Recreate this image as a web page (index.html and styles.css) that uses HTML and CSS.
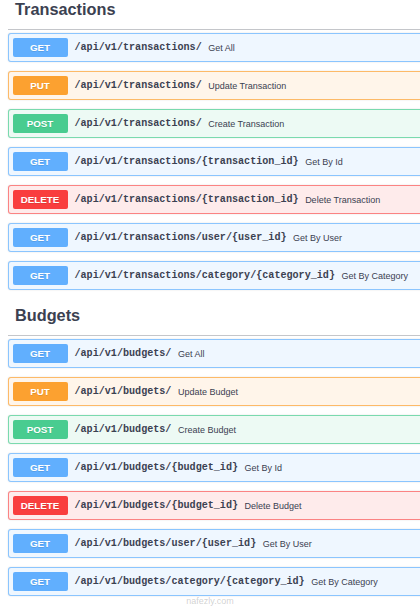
FILE: index.html
```html
<!DOCTYPE html>
<html lang="en">
<head>
  <meta charset="UTF-8">
  <title>API</title>
  <link rel="stylesheet" href="styles.css">
</head>
<body>
  <div class="wrapper">
    <section class="tag-section first">
      <h4 class="tag">Transactions</h4>
      <div class="op get"><span class="method">GET</span><span class="path">/api/v1/transactions/</span><span class="summary">Get All</span></div>
      <div class="op put"><span class="method">PUT</span><span class="path">/api/v1/transactions/</span><span class="summary">Update Transaction</span></div>
      <div class="op post"><span class="method">POST</span><span class="path">/api/v1/transactions/</span><span class="summary">Create Transaction</span></div>
      <div class="op get"><span class="method">GET</span><span class="path">/api/v1/transactions/{transaction_id}</span><span class="summary">Get By Id</span></div>
      <div class="op delete"><span class="method">DELETE</span><span class="path">/api/v1/transactions/{transaction_id}</span><span class="summary">Delete Transaction</span></div>
      <div class="op get"><span class="method">GET</span><span class="path">/api/v1/transactions/user/{user_id}</span><span class="summary">Get By User</span></div>
      <div class="op get"><span class="method">GET</span><span class="path">/api/v1/transactions/category/{category_id}</span><span class="summary">Get By Category</span></div>
    </section>

    <section class="tag-section">
      <h4 class="tag">Budgets</h4>
      <div class="op get"><span class="method">GET</span><span class="path">/api/v1/budgets/</span><span class="summary">Get All</span></div>
      <div class="op put"><span class="method">PUT</span><span class="path">/api/v1/budgets/</span><span class="summary">Update Budget</span></div>
      <div class="op post"><span class="method">POST</span><span class="path">/api/v1/budgets/</span><span class="summary">Create Budget</span></div>
      <div class="op get"><span class="method">GET</span><span class="path">/api/v1/budgets/{budget_id}</span><span class="summary">Get By Id</span></div>
      <div class="op delete"><span class="method">DELETE</span><span class="path">/api/v1/budgets/{budget_id}</span><span class="summary">Delete Budget</span></div>
      <div class="op get"><span class="method">GET</span><span class="path">/api/v1/budgets/user/{user_id}</span><span class="summary">Get By User</span></div>
      <div class="op get"><span class="method">GET</span><span class="path">/api/v1/budgets/category/{category_id}</span><span class="summary">Get By Category</span></div>
    </section>
  </div>

  <div class="watermark">nafezly.com</div>
</body>
</html>
```

FILE: styles.css
```css
html, body {
  margin: 0;
  padding: 0;
  background-color: #fff;
  overflow: hidden;
}
body {
  font-family: "Liberation Sans", Arial, sans-serif;
  color: #3b4151;
  position: relative;
  height: 609px;
}
.wrapper {
  width: 470px;
  padding-left: 8px;
}
.tag-section.first {
  margin-top: -7px;
}
.tag {
  margin: 0 0 3px;
  padding: 7px 14px 10px 7px;
  font-size: 16.3px;
  font-weight: bold;
  line-height: 19px;
  border-bottom: 1px solid rgba(59, 65, 81, 0.3);
}
.op {
  display: flex;
  align-items: center;
  box-sizing: border-box;
  height: 29px;
  margin-bottom: 9px;
  padding: 0 3.5px;
  border: 1px solid;
  border-radius: 3px;
  box-shadow: 0 0 2px rgba(0, 0, 0, 0.12);
}
.method {
  flex: none;
  width: 55px;
  height: 19px;
  line-height: 19px;
  text-align: center;
  color: #fff;
  font-size: 9.8px;
  font-weight: bold;
  border-radius: 2px;
  text-shadow: 0 1px 0 rgba(0, 0, 0, 0.1);
}
.path {
  padding: 0 6.5px 0 7px;
  font-family: "Liberation Mono", "DejaVu Sans Mono", monospace;
  font-size: 10.1px;
  font-weight: bold;
  white-space: nowrap;
}
.summary {
  font-size: 9px;
  white-space: nowrap;
}

/* method colours */
.get { background-color: #eff7ff; border-color: rgba(97, 175, 254, 0.7); }
.get .method { background-color: #61affe; }
.put { background-color: #fff5ea; border-color: rgba(252, 161, 48, 0.7); }
.put .method { background-color: #fca130; }
.post { background-color: #edfaf4; border-color: rgba(73, 204, 144, 0.7); }
.post .method { background-color: #49cc90; }
.delete { background-color: #feebeb; border-color: rgba(249, 62, 62, 0.6); }
.delete .method { background-color: #f93e3e; }

.watermark {
  position: absolute;
  left: 0;
  right: 0;
  bottom: 3px;
  text-align: center;
  font-size: 9px;
  color: rgba(120, 120, 120, 0.35);
}
```
